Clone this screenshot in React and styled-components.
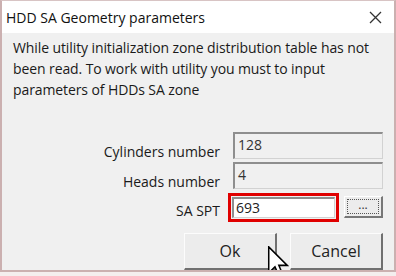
import React from 'react';
import styled, { createGlobalStyle } from 'styled-components';

const GlobalStyle = createGlobalStyle`
  html, body {
    margin: 0;
    padding: 0;
    background: #f4eeee;
  }
  body {
    font-family: "Open Sans", "Noto Sans", sans-serif;
  }
`;

// Window frame
const Window = styled.div`
  position: relative;
  width: 396px;
  height: 272px;
  box-sizing: border-box;
  border: 2px solid #cbb0b0;
  border-top: 1px solid #d8c4c4;
  background: #f0f0f0;
  display: flex;
  flex-direction: column;
  overflow: hidden;
`;

const TitleBar = styled.div`
  height: 32px;
  background: #ffffff;
  display: flex;
  align-items: center;
  justify-content: space-between;
  padding: 0 12px 0 4px;
  flex-shrink: 0;
`;

const Title = styled.span`
  font-size: 14px;
  color: #111;
`;

const Body = styled.div`
  flex: 1;
  display: flex;
  flex-direction: column;
  padding: 4px 11px 0 11px;
`;

const Message = styled.p`
  margin: 0;
  font-size: 14px;
  line-height: 21px;
  letter-spacing: -0.1px;
  color: #1a1a1a;
`;

const Form = styled.div`
  margin-top: 32px;
  display: grid;
  grid-template-columns: 207px 150px;
  column-gap: 13px;
  row-gap: 3px;
  align-items: end;
`;

const Label = styled.label`
  font-size: 14px;
  color: #1a1a1a;
  text-align: right;
  line-height: 18px;
  margin-bottom: ${(p) => p.$lift || 0}px;
`;

const ReadonlyBox = styled.div`
  height: 27px;
  box-sizing: border-box;
  border-top: 2px solid #8e8e8e;
  border-left: 2px solid #8e8e8e;
  border-right: 1px solid #d2d2d2;
  border-bottom: 1px solid #d2d2d2;
  background: #f0f0f0;
  font-size: 14px;
  color: #333;
  padding: 1px 0 0 3px;
  line-height: 20px;
`;

const SptRow = styled.div`
  display: flex;
  align-items: center;
  height: 30px;
  gap: 9px;
`;

const Input = styled.input`
  width: 103px;
  height: 21px;
  box-sizing: border-box;
  margin-left: -1px;
  border-top: 2px solid #8e8e8e;
  border-left: 2px solid #8e8e8e;
  border-right: 1px solid #d2d2d2;
  border-bottom: 1px solid #d2d2d2;
  background: #fff;
  font-family: inherit;
  font-size: 14px;
  color: #222;
  padding: 0 0 0 2px;
  outline: 3px solid #e00000;
  outline-offset: 1px;
`;

const DotsButton = styled.button`
  width: 39px;
  height: 22px;
  box-sizing: border-box;
  border-top: 1px solid #fff;
  border-left: 1px solid #fff;
  border-right: 2px solid #777;
  border-bottom: 2px solid #777;
  background: #ececec;
  padding: 2px;
  font-family: inherit;
  font-size: 12px;
  color: #333;
  display: flex;
  align-items: center;
  justify-content: center;
  span {
    flex: 1;
    height: 100%;
    box-sizing: border-box;
    border: 1px dotted #555;
    line-height: 10px;
  }
`;

const ButtonRow = styled.div`
  margin-top: 11px;
  display: flex;
  justify-content: flex-end;
  gap: 13px;
`;

const Button = styled.button`
  width: 93px;
  height: 37px;
  box-sizing: border-box;
  border-top: 1px solid #fcfcfc;
  border-left: 1px solid #fcfcfc;
  border-right: 2px solid #707070;
  border-bottom: 2px solid #707070;
  background: #ececec;
  font-family: inherit;
  font-size: 16px;
  color: #222;
  padding: 0;
`;

const Cursor = styled.svg`
  position: absolute;
  left: 265px;
  top: 245px;
`;

const CloseIcon = () => (
  <svg width="13" height="13" viewBox="0 0 13 13">
    <path d="M1 1 L12 12 M12 1 L1 12" stroke="#333" strokeWidth="1.3" />
  </svg>
);

const App = () => {
  return (
    <>
      <GlobalStyle />
      <Window>
        <TitleBar>
          <Title>HDD SA Geometry parameters</Title>
          <CloseIcon />
        </TitleBar>
        <Body>
          <Message>
            While utility initialization zone distribution table has not been read. To work with
            utility you must to input parameters of HDDs SA zone
          </Message>
          <Form>
            <Label $lift={-2}>Cylinders number</Label>
            <ReadonlyBox>128</ReadonlyBox>
            <Label $lift={-2}>Heads number</Label>
            <ReadonlyBox>4</ReadonlyBox>
            <Label $lift={2}>SA SPT</Label>
            <SptRow>
              <Input defaultValue="693" />
              <DotsButton>
                <span>...</span>
              </DotsButton>
            </SptRow>
          </Form>
          <ButtonRow>
            <Button>Ok</Button>
            <Button>Cancel</Button>
          </ButtonRow>
        </Body>
        <Cursor width="22" height="32" viewBox="0 0 12 19">
          <path
            d="M0.5 0.5 L0.5 16 L4.2 12.3 L6.8 18.3 L9 17.4 L6.5 11.5 L11.5 11.5 Z"
            fill="#fff"
            stroke="#000"
            strokeWidth="0.9"
            strokeLinejoin="miter"
          />
        </Cursor>
      </Window>
    </>
  );
};

export default App;
